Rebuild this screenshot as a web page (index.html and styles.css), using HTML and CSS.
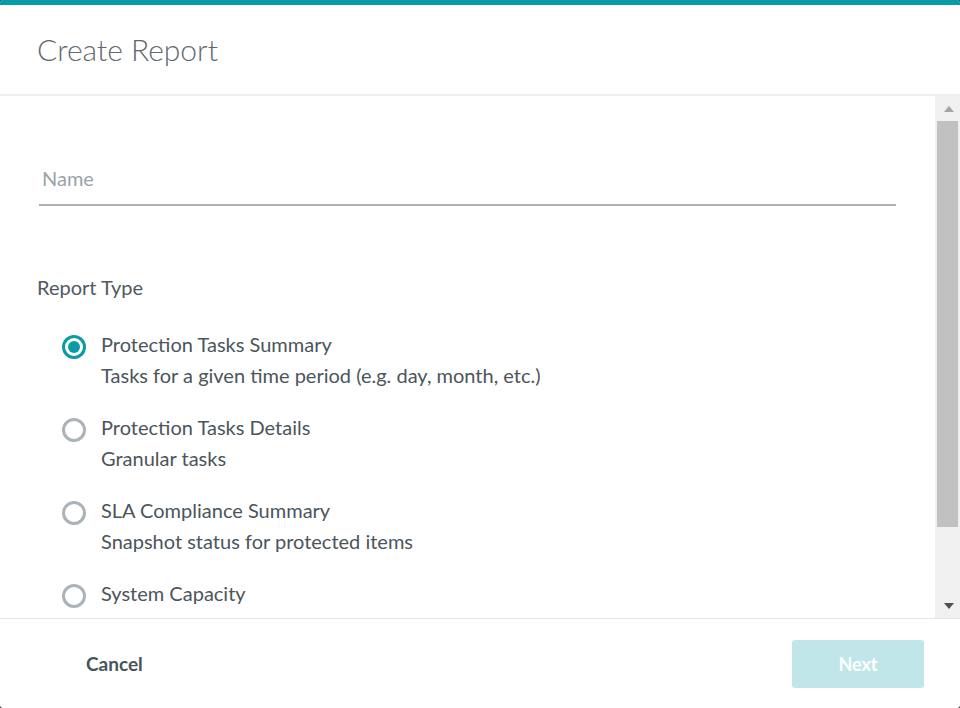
FILE: index.html
```html
<!DOCTYPE html>
<html lang="en">
<head>
<meta charset="utf-8">
<title>Create Report</title>
<link rel="stylesheet" href="styles.css">
</head>
<body>
<div class="dialog">
  <div class="accent"></div>
  <header class="head">
    <h1 class="title">Create Report</h1>
  </header>
  <div class="main">
    <div class="content">
      <div class="field">
        <input class="name-input" type="text" placeholder="Name">
      </div>
      <div class="section-label">Report Type</div>
      <ul class="options">
        <li class="option">
          <span class="radio checked"><span class="dot"></span></span>
          <div class="option-text">
            <div class="option-title">Protection Tasks Summary</div>
            <div class="option-desc">Tasks for a given time period (e.g. day, month, etc.)</div>
          </div>
        </li>
        <li class="option">
          <span class="radio"></span>
          <div class="option-text">
            <div class="option-title">Protection Tasks Details</div>
            <div class="option-desc">Granular tasks</div>
          </div>
        </li>
        <li class="option">
          <span class="radio"></span>
          <div class="option-text">
            <div class="option-title">SLA Compliance Summary</div>
            <div class="option-desc">Snapshot status for protected items</div>
          </div>
        </li>
        <li class="option">
          <span class="radio"></span>
          <div class="option-text">
            <div class="option-title">System Capacity</div>
            <div class="option-desc">Storage consumption for protected items</div>
          </div>
        </li>
      </ul>
    </div>
    <div class="scrollbar">
      <div class="arrow up"></div>
      <div class="track"><div class="thumb"></div></div>
      <div class="arrow down"></div>
    </div>
  </div>
  <footer class="foot">
    <button class="btn-cancel" type="button">Cancel</button>
    <button class="btn-next" type="button">Next</button>
  </footer>
</div>
</body>
</html>
```

FILE: styles.css
```css
* { box-sizing: border-box; }
html, body { margin: 0; padding: 0; }
body {
  background: #2b2f33;
  font-family: Lato, "Noto Sans", sans-serif;
  width: 960px;
  height: 708px;
  overflow: hidden;
}
.dialog {
  width: 960px;
  height: 708px;
  background: #fff;
  border-radius: 3px;
  overflow: hidden;
  display: flex;
  flex-direction: column;
}
.accent {
  height: 5px;
  background: #089ca7;
  flex: none;
}
.head {
  height: 91px;
  flex: none;
  border-bottom: 2px solid #efefef;
  display: flex;
  align-items: center;
  padding: 0 37px 2px;
}
.title {
  margin: 0;
  font-weight: 300;
  font-size: 30px;
  color: #5f6a70;
  letter-spacing: 0;
}
.main {
  flex: 1;
  display: flex;
  min-height: 0;
}
.content {
  flex: 1;
  overflow: hidden;
  padding: 55px 39px 0 37px;
}
.field {
  padding-left: 2px;
}
.name-input {
  display: block;
  width: 100%;
  height: 55px;
  border: none;
  border-bottom: 2px solid #a9b1b6;
  padding: 0 3px;
  font-family: Lato, sans-serif;
  font-size: 20px;
  color: #4c565d;
  outline: none;
  background: transparent;
}
.name-input::placeholder { color: #9aa3a9; }
.section-label {
  margin-top: 68px;
  font-size: 20px;
  line-height: 26px;
  color: #4f5960;
}
.options {
  list-style: none;
  margin: 29px 0 0;
  padding: 0 0 0 25px;
  display: flex;
  flex-direction: column;
  gap: 21px;
}
.option {
  display: flex;
  align-items: flex-start;
  gap: 15px;
}
.radio {
  flex: none;
  width: 24px;
  height: 24px;
  border-radius: 50%;
  border: 3px solid #abb3b8;
  margin-top: 6px;
  display: flex;
  align-items: center;
  justify-content: center;
}
.radio.checked { border-color: #0a9ba6; }
.dot {
  width: 12px;
  height: 12px;
  border-radius: 50%;
  background: #0a9ba6;
}
.option-text {
  font-size: 20px;
  line-height: 31px;
  color: #4b555c;
}
.scrollbar {
  flex: none;
  width: 25px;
  background: #f0f0f0;
  display: flex;
  flex-direction: column;
  align-items: center;
  padding-left: 2px;
}
.arrow {
  flex: none;
  height: 25px;
  width: 100%;
  display: flex;
  align-items: center;
  justify-content: center;
}
.arrow::before {
  content: "";
  width: 0;
  height: 0;
  border-left: 5.5px solid transparent;
  border-right: 5.5px solid transparent;
}
.arrow.up::before { border-bottom: 6px solid #a3a3a3; }
.arrow.down::before { border-top: 6px solid #505050; }
.track {
  flex: 1;
  width: 100%;
  display: flex;
  flex-direction: column;
  padding: 0 2px 0 0;
}
.thumb {
  height: 406px;
  background: #c1c1c1;
}
.foot {
  flex: none;
  height: 90px;
  border-top: 1px solid #e6e6e6;
  display: flex;
  align-items: center;
  justify-content: space-between;
  padding: 0 36px 0 68px;
}
.btn-cancel {
  border: none;
  background: transparent;
  font-family: Lato, sans-serif;
  font-weight: 700;
  font-size: 19px;
  color: #49535a;
  padding: 10px 18px;
  cursor: pointer;
}
.btn-next {
  width: 132px;
  height: 48px;
  border: none;
  border-radius: 3px;
  background: #c1e6ea;
  color: #fff;
  font-family: Lato, sans-serif;
  font-weight: 700;
  font-size: 18px;
}
```
